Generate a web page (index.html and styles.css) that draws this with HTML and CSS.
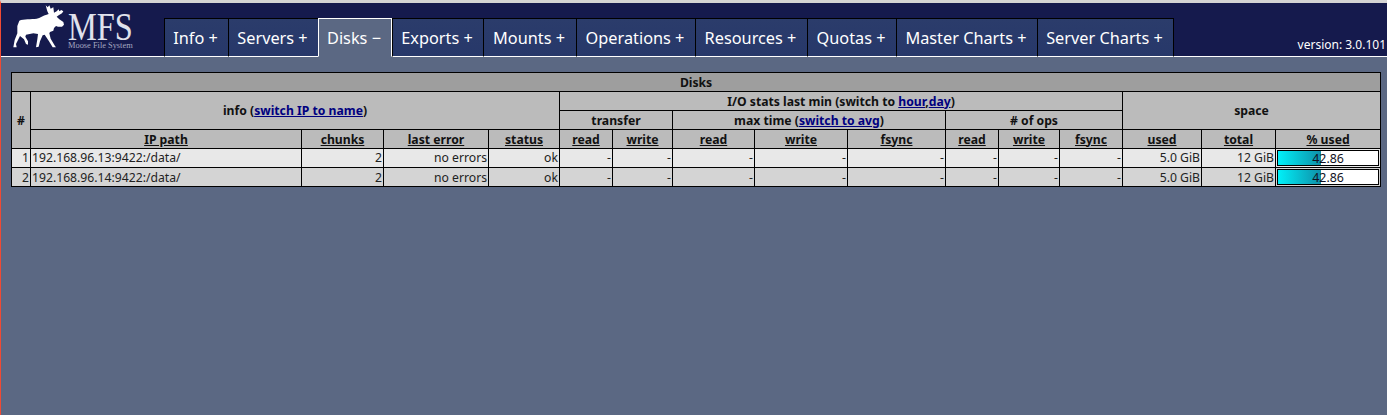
FILE: index.html
```html
<!DOCTYPE html>
<html lang="en">
<head>
<meta charset="utf-8">
<title>MFS</title>
<link rel="stylesheet" href="styles.css">
</head>
<body>
<header class="header">
  <div class="logo">
    <svg class="moose" width="54" height="46" viewBox="39 12 162 138" aria-hidden="true">
      <path fill="#fff" d="M58 62C70 56 95 58 110 56C120 54 130 46 140 44L146 42L142 34L137 16L143 22L148 16L152 26L160 22L162 38L170 34L176 28L178 34L184 30L190 34L186 40L176 46L170 50L178 58L190 66L192 74L186 80L174 80L168 78L162 84L160 92L150 96L148 100L152 116L165 138L168 142L158 142L146 122L134 104L128 106L120 124L116 140L108 142L112 118L114 102L100 100L78 104L76 110L84 124L84 134L78 132L72 118L60 108L54 120L48 132L50 142L40 142L44 120L52 100L52 78Z"/>
    </svg>
    <div class="brand">
      <span class="brand-name">MFS</span>
      <span class="brand-sub">Moose File System</span>
    </div>
  </div>
  <nav class="tabs">
    <a class="tab">Info +</a>
    <a class="tab">Servers +</a>
    <a class="tab active">Disks −</a>
    <a class="tab">Exports +</a>
    <a class="tab">Mounts +</a>
    <a class="tab">Operations +</a>
    <a class="tab">Resources +</a>
    <a class="tab">Quotas +</a>
    <a class="tab">Master Charts +</a>
    <a class="tab">Server Charts +</a>
  </nav>
  <div class="version">version: 3.0.101</div>
</header>
<main class="content">
<table class="disks">
  <colgroup>
    <col class="c1"><col class="c2"><col class="c3"><col class="c4"><col class="c5">
    <col class="c6"><col class="c7"><col class="c8"><col class="c9"><col class="c10">
    <col class="c11"><col class="c12"><col class="c13"><col class="c14"><col class="c15"><col class="c16">
  </colgroup>
  <thead>
    <tr><th class="title" colspan="16">Disks</th></tr>
    <tr>
      <th rowspan="3">#</th>
      <th colspan="4" rowspan="2">info (<a href="#">switch IP to name</a>)</th>
      <th colspan="8">I/O stats last min (switch to <a href="#">hour</a>,<a href="#">day</a>)</th>
      <th colspan="3" rowspan="2">space</th>
    </tr>
    <tr>
      <th colspan="2">transfer</th>
      <th colspan="3">max time (<a href="#">switch to avg</a>)</th>
      <th colspan="3"># of ops</th>
    </tr>
    <tr class="sort">
      <th><u>IP path</u></th><th><u>chunks</u></th><th><u>last error</u></th><th><u>status</u></th>
      <th><u>read</u></th><th><u>write</u></th>
      <th><u>read</u></th><th><u>write</u></th><th><u>fsync</u></th>
      <th><u>read</u></th><th><u>write</u></th><th><u>fsync</u></th>
      <th><u>used</u></th><th><u>total</u></th><th><u>% used</u></th>
    </tr>
  </thead>
  <tbody>
    <tr class="odd">
      <td>1</td><td class="left">192.168.96.13:9422:/data/</td><td>2</td><td>no errors</td><td>ok</td>
      <td>-</td><td>-</td><td>-</td><td>-</td><td>-</td><td>-</td><td>-</td><td>-</td>
      <td>5.0 GiB</td><td>12 GiB</td>
      <td class="barcell"><div class="bar"><div class="fill"></div><span class="barval">42.86</span></div></td>
    </tr>
    <tr class="even">
      <td>2</td><td class="left">192.168.96.14:9422:/data/</td><td>2</td><td>no errors</td><td>ok</td>
      <td>-</td><td>-</td><td>-</td><td>-</td><td>-</td><td>-</td><td>-</td><td>-</td>
      <td>5.0 GiB</td><td>12 GiB</td>
      <td class="barcell"><div class="bar"><div class="fill"></div><span class="barval">42.86</span></div></td>
    </tr>
  </tbody>
</table>
</main>
</body>
</html>
```
FILE: styles.css
```css
html, body { margin: 0; height: 100%; }
body {
  min-height: 415px;
  box-sizing: border-box;
  border-top: 3px solid #d4d4d4;
  border-left: 1px solid #f04a33;
  background: #5b6883;
  font-family: "Noto Sans", "Open Sans", sans-serif;
  font-size: 12px;
  color: #222;
  overflow: hidden;
}
.header {
  height: 53px;
  background: #151a4d;
  border-bottom: 1px solid #fff;
  display: flex;
  align-items: flex-end;
  color: #fff;
}
.logo { width: 163px; height: 53px; display: flex; align-items: flex-start; padding: 1px 0 0 12px; box-sizing: border-box; }
.moose { display: block; flex: none; }
.brand { margin-left: 1px; display: flex; flex-direction: column; padding-top: 8px; }
.brand-name { font-family: "Liberation Serif", serif; font-size: 40px; line-height: 29px; color: #e0e2ec; transform: scaleX(.81); transform-origin: left; white-space: nowrap; width: 65px; }
.brand-sub { font-family: "Liberation Serif", serif; font-size: 8.4px; line-height: 9px; color: #a4a7c0; white-space: nowrap; }
.tabs { display: flex; align-items: flex-end; height: 38px; margin-bottom: -1px; }
.tab {
  box-sizing: border-box;
  height: 39px;
  display: flex;
  align-items: center;
  justify-content: center;
  background: linear-gradient(#2b3c6b, #27386a);
  border: 1px solid #000;
  border-bottom: 1px solid #fff;
  border-right: 0;
  font-size: 16.3px;
  color: #fff;
  white-space: nowrap;
  padding-right: 2px;
}
.tab:last-child { border-right: 1px solid #000; }
.tab:nth-child(1) { width: 64px; }
.tab:nth-child(2) { width: 90px; }
.tab:nth-child(3) { width: 74px; }
.tab:nth-child(4) { width: 91px; }
.tab:nth-child(5) { width: 93px; }
.tab:nth-child(6) { width: 119px; }
.tab:nth-child(7) { width: 112px; }
.tab:nth-child(8) { width: 89px; }
.tab:nth-child(9) { width: 141px; }
.tab:nth-child(10) { width: 137px; }
.tab.active {
  background: #5b6883;
  border: 1px solid #fff;
  border-bottom: 1px solid #5b6883;
}
.version { margin-left: auto; padding: 0 1px 3px 0; font-size: 12px; line-height: 16px; }
.content { padding: 15px 6px 0 10px; }
.disks {
  table-layout: fixed;
  border-collapse: collapse;
  width: 1369px;
  border: 1px solid #000;
}
.disks th, .disks td {
  border: 1px solid #000;
  height: 18px;
  padding: 0 1px;
  font-size: 12.2px;
  line-height: 16px;
  box-sizing: content-box;
  white-space: nowrap;
  overflow: hidden;
}
.disks th { background: #bbb; font-weight: 700; text-align: center; height: 17px; padding-top: 1px; color: #111; }
.disks th.title { background: #9e9e9e; }
.disks td { text-align: right; }
.disks td.left { text-align: left; }
.disks a { color: #00007f; text-decoration: underline; }
.odd td { background: #e8e8e8; }
.even td { background: #d4d4d4; }
.even td:not(.barcell) { padding-top: 1px; height: 17px; }
.c1 { width: 19px; } .c2 { width: 271px; } .c3 { width: 82px; } .c4 { width: 105px; }
.c5 { width: 71px; } .c6 { width: 53px; } .c7 { width: 60px; } .c8 { width: 82px; }
.c9 { width: 93px; } .c10 { width: 98px; } .c11 { width: 53px; } .c12 { width: 61px; }
.c13 { width: 63px; } .c14 { width: 79px; } .c15 { width: 74px; } .c16 { width: 105px; }
.disks td.barcell { padding: 1px; height: 16px; }
.bar {
  position: relative;
  height: 16px;
  box-sizing: border-box;
  border: 1px solid #000;
  background: #fff;
  text-align: center;
}
.fill { width: 42.86%; height: 100%; background: linear-gradient(90deg, #00f0f8, #0f8fa8); }
.barval { position: absolute; inset: 0; line-height: 16px; font-size: 12.4px; color: #112; }
```
